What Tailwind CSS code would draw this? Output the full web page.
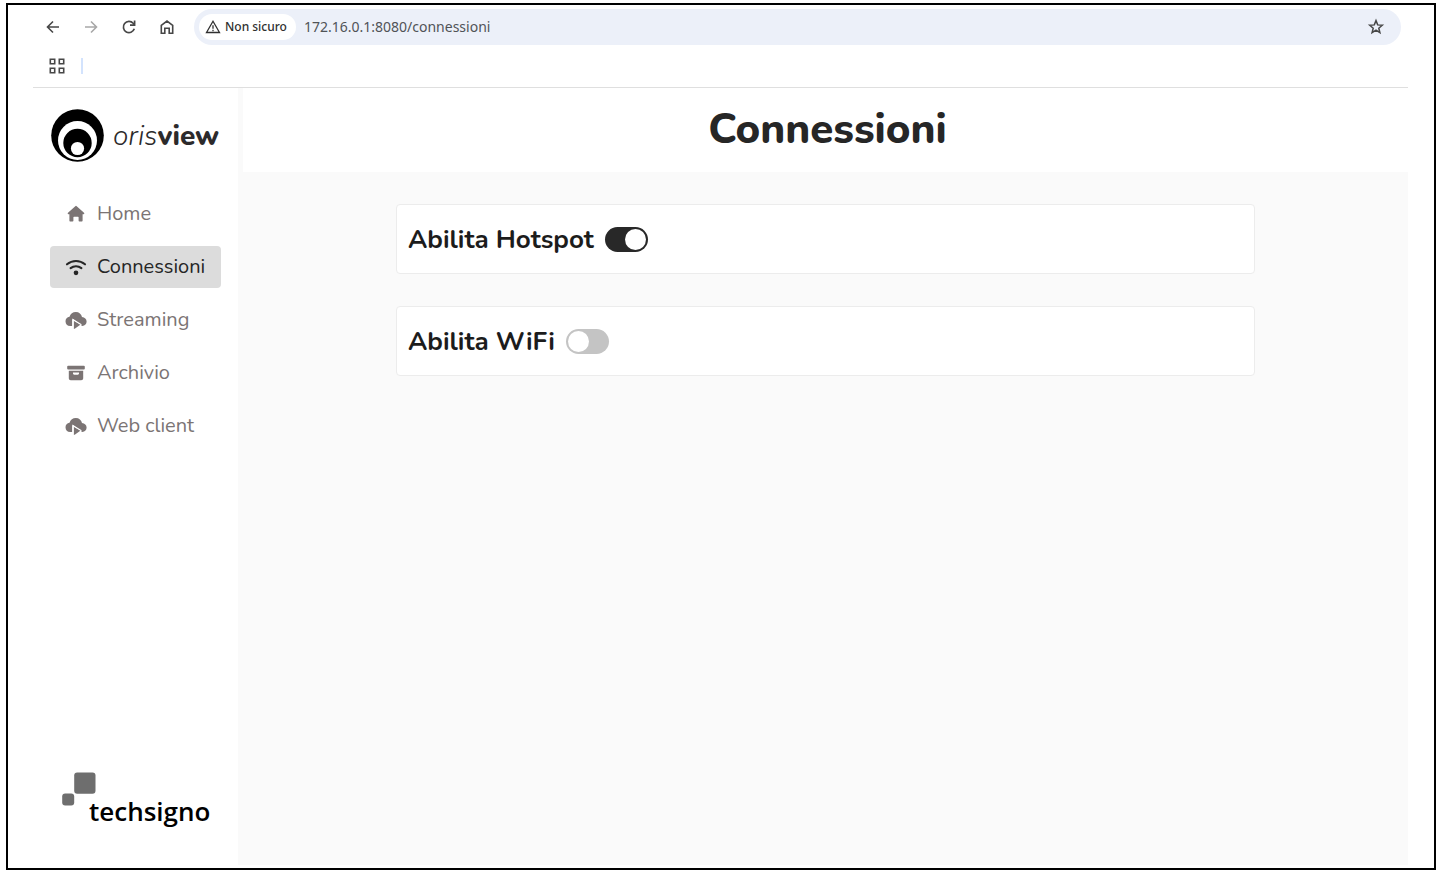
<!DOCTYPE html>
<html lang="it">
<head>
  <meta charset="UTF-8" />
  <meta name="viewport" content="width=device-width, initial-scale=1.0"/>
  <title>Connessioni</title>
  <script src="https://cdn.jsdelivr.net/npm/@tailwindcss/browser@4"></script>
</head>
<body class="min-h-screen flex flex-col bg-white pt-[3px] pl-[6px] pr-[6px] pb-[6px] font-[Nunito,'Noto_Sans',sans-serif]">
  <div class="flex-1 flex flex-col border-2 border-black pt-1 pb-[3px]">

    <!-- Browser toolbar -->
    <div class="flex items-center h-9 pl-9 pr-[33px] text-[#474747] font-['Noto_Sans',sans-serif]">
      <div class="flex items-center gap-5 mr-[18px]">
        <button type="button" aria-label="Indietro">
          <svg class="size-[18px]" viewBox="0 0 18 18" fill="none" stroke="currentColor" stroke-width="1.6"><path d="M15 9H3.5M9 3.500 3.500 9 9 14.500"/></svg>
        </button>
        <button type="button" aria-label="Avanti" class="text-[#a8a8a8]">
          <svg class="size-[18px]" viewBox="0 0 18 18" fill="none" stroke="currentColor" stroke-width="1.6"><path d="M3 9h11.500M9 3.500 14.500 9 9 14.500"/></svg>
        </button>
        <button type="button" aria-label="Ricarica">
          <svg class="size-[18px]" viewBox="0 0 18 18" fill="none" stroke="currentColor" stroke-width="1.7"><path d="M14.300 10.800A5.600 5.600 0 1 1 13.200 5.300L14.300 6.600"/><path d="M14.600 2.600v4.600H10"/></svg>
        </button>
        <button type="button" aria-label="Pagina iniziale">
          <svg class="size-[18px]" viewBox="0 0 18 18" fill="none" stroke="currentColor" stroke-width="1.600"><path d="M3.300 7.300 9 3l5.700 4.300v7.900h-3.500v-5H6.800v5H3.300z"/></svg>
        </button>
      </div>
      <div class="flex-1 flex items-center h-9 pl-[5px] pr-4 rounded-full bg-[#ecf0f9]">
        <button type="button" class="flex items-center gap-1 h-[26px] pl-1.5 pr-[9px] rounded-full bg-white text-[#303030] text-xs font-medium">
          <svg class="size-4" viewBox="0 0 16 16" fill="none" stroke="currentColor" stroke-width="1.300"><path d="M8 2.200 14.500 13.500H1.500z"/><path d="M8 6.200v3.600M8 10.800v1.400"/></svg>
          Non sicuro
        </button>
        <input type="text" aria-label="Indirizzo" value="172.16.0.1:8080/connessioni" class="flex-1 ml-2 bg-transparent text-sm text-[#505357] outline-none"/>
        <button type="button" aria-label="Aggiungi ai preferiti">
          <svg class="size-[18px]" viewBox="0 0 18 18" fill="none" stroke="currentColor" stroke-width="1.500"><path d="m9 2.600 1.700 4.300 4.600.3-3.500 3 1.100 4.500L9 12.200l-3.900 2.500 1.100-4.500-3.500-3 4.600-.3z"/></svg>
        </button>
      </div>
    </div>

    <div class="flex-1 flex flex-col ml-[25px] mr-[26px]">
      <!-- Bookmarks bar -->
      <div class="flex items-center gap-4 h-[43px] pl-4 border-b border-[#dfdfdf]">
        <button type="button" aria-label="App" class="text-[#474747]">
          <svg class="size-4" viewBox="0 0 16 16" fill="none" stroke="currentColor" stroke-width="1.600"><path d="M1.300 1.300h4.400v4.400H1.300zM10.300 1.300h4.400v4.400h-4.400zM1.300 10.300h4.400v4.400H1.300zM10.300 10.300h4.400v4.400h-4.400z"/></svg>
        </button>
        <span class="w-0.5 h-4 bg-[#d3e3fd]"></span>
      </div>

      <div class="flex-1 flex">
        <!-- Sidebar -->
        <aside class="w-[205px] shrink-0 flex flex-col pt-[21px] pb-[38px] px-[17px]">
          <a href="#" class="flex items-center gap-[9px] pl-px text-[#2c2a2b] text-[28px] leading-[32px]">
            <svg class="size-[53px] shrink-0" viewBox="0 0 53 53">
              <circle cx="26.500" cy="26.500" r="26.300" fill="#000"/>
              <circle cx="26.500" cy="31.500" r="19.500" fill="#fff"/>
              <circle cx="26.500" cy="34" r="14.200" fill="#000"/>
              <circle cx="26.500" cy="39.500" r="6.600" fill="#fff"/>
            </svg>
            <span><span class="italic font-light">oris</span><span class="font-extrabold">view</span></span>
          </a>

          <nav class="flex flex-col gap-[11px] mt-[31px] text-[20px] text-[#7b7474]">
            <a href="#" class="flex items-center gap-2.5 h-[42px] px-[15px] rounded-sm">
              <svg class="size-[22px] shrink-0" viewBox="0 0 22 22" fill="currentColor"><path d="M10.300 3.200a1 1 0 0 1 1.400 0l7.300 6.600c.6.600.3 1.400-.5 1.400h-.9v6.400c0 .6-.4 1-1 1h-2.200c-.5 0-.8-.3-.8-.8v-3.500c0-.4-.2-.6-.6-.6H9c-.4 0-.6.2-.6.600v3.500c0 .5-.3.800-.8.800H5.400c-.6 0-1-.4-1-1v-6.400h-.9c-.8 0-1.100-.8-.5-1.400z"/></svg>
              Home
            </a>
            <a href="#" aria-current="page" class="flex items-center gap-2.5 h-[42px] px-[15px] rounded-sm bg-[#dcdcdc] text-[#262626]">
              <svg class="size-[22px] shrink-0" viewBox="0 0 22 22" fill="none" stroke="currentColor" stroke-width="2.100" stroke-linecap="round"><path d="M2 8.300c5.200-4.400 12.800-4.400 18 0M5.600 12.200c3.200-2.500 7.600-2.500 10.800 0"/><circle cx="11" cy="16.800" r="1.300" fill="currentColor"/></svg>
              Connessioni
            </a>
            <a href="#" class="flex items-center gap-2.5 h-[42px] px-[15px] rounded-sm">
              <svg class="size-[22px] shrink-0" viewBox="0 0 22 22" fill="currentColor"><path d="M7.300 17H5.200A5 5 0 0 1 .5 12.200c0-2.400 1.600-4.100 4-4.500C5.500 4.800 7.700 2.900 10.800 2.900c3.300 0 5.600 2.100 6.200 5 2.700.2 4.600 2 4.600 4.600 0 2.300-1.600 4.200-4.400 4.500L8.800 10.400c-.7-.4-1.500 0-1.500.8z"/><path d="M8.800 11.800v7.500c0 .5.500.7.900.4l6-4.100z" /><path d="M7.900 19V10.500l8.500 5.300" fill="none" stroke="#fff" stroke-width="1.200"/></svg>
              Streaming
            </a>
            <a href="#" class="flex items-center gap-2.5 h-[42px] px-[15px] rounded-sm">
              <svg class="size-[22px] shrink-0" viewBox="0 0 22 22" fill="currentColor"><rect x="2.200" y="3.800" width="17.600" height="3.800" rx="1"/><path fill-rule="evenodd" d="M3.800 8.700h14.400v7.600c0 1.200-.8 2-2 2H5.800c-1.200 0-2-.8-2-2zm4.200 1.900v1c0 .7.500 1.200 1.200 1.200h3.600c.7 0 1.200-.5 1.200-1.200v-1z"/></svg>
              Archivio
            </a>
            <a href="#" class="flex items-center gap-2.5 h-[42px] px-[15px] rounded-sm">
              <svg class="size-[22px] shrink-0" viewBox="0 0 22 22" fill="currentColor"><path d="M7.300 17H5.200A5 5 0 0 1 .5 12.200c0-2.400 1.600-4.100 4-4.500C5.500 4.800 7.700 2.900 10.800 2.900c3.300 0 5.600 2.100 6.200 5 2.700.2 4.600 2 4.600 4.600 0 2.300-1.600 4.200-4.400 4.500L8.800 10.400c-.7-.4-1.500 0-1.500.8z"/><path d="M8.800 11.800v7.500c0 .5.500.7.900.4l6-4.100z" /><path d="M7.900 19V10.500l8.500 5.300" fill="none" stroke="#fff" stroke-width="1.200"/></svg>
              Web client
            </a>
          </nav>

          <a href="#" class="mt-auto flex flex-col pl-3 text-black font-['Open_Sans',sans-serif]">
            <svg class="w-[34px] h-[35px]" viewBox="0 0 34 35" fill="#6e6e6e"><rect x="12.200" y=".5" width="21.300" height="21.300" rx="3"/><rect x=".2" y="21.600" width="12" height="12" rx="3"/></svg>
            <span class="pl-[27px] -mt-3 text-[26px] leading-[32px] font-semibold">techsigno</span>
          </a>
        </aside>

        <!-- Content -->
        <main class="flex-1 flex flex-col pl-[5px] bg-[#fafafa]">
          <header class="flex items-center justify-center h-[84px] pl-1 bg-white">
            <h1 class="text-[42px] leading-[48px] font-extrabold text-[#262626]">Connessioni</h1>
          </header>
          <div class="w-full max-w-[859px] mx-auto mt-8 flex flex-col gap-8 text-[#1c1c1c] text-[26px] font-bold">
            <div class="flex items-center gap-[11px] h-[70px] px-[11px] rounded-sm border border-[#ececec] bg-white">
              <label for="hotspot">Abilita Hotspot</label>
              <input id="hotspot" type="checkbox" role="switch" checked class="appearance-none w-[43px] h-[25px] rounded-full bg-[#c4c4c4] checked:bg-[#282828] before:block before:size-[21px] before:m-0.5 before:rounded-full before:bg-white checked:before:ml-5"/>
            </div>
            <div class="flex items-center gap-[11px] h-[70px] px-[11px] rounded-sm border border-[#ececec] bg-white">
              <label for="wifi">Abilita WiFi</label>
              <input id="wifi" type="checkbox" role="switch" class="appearance-none w-[43px] h-[25px] rounded-full bg-[#c4c4c4] checked:bg-[#282828] before:block before:size-[21px] before:m-0.5 before:rounded-full before:bg-white checked:before:ml-5"/>
            </div>
          </div>
        </main>
      </div>
    </div>
  </div>
</body>
</html>
